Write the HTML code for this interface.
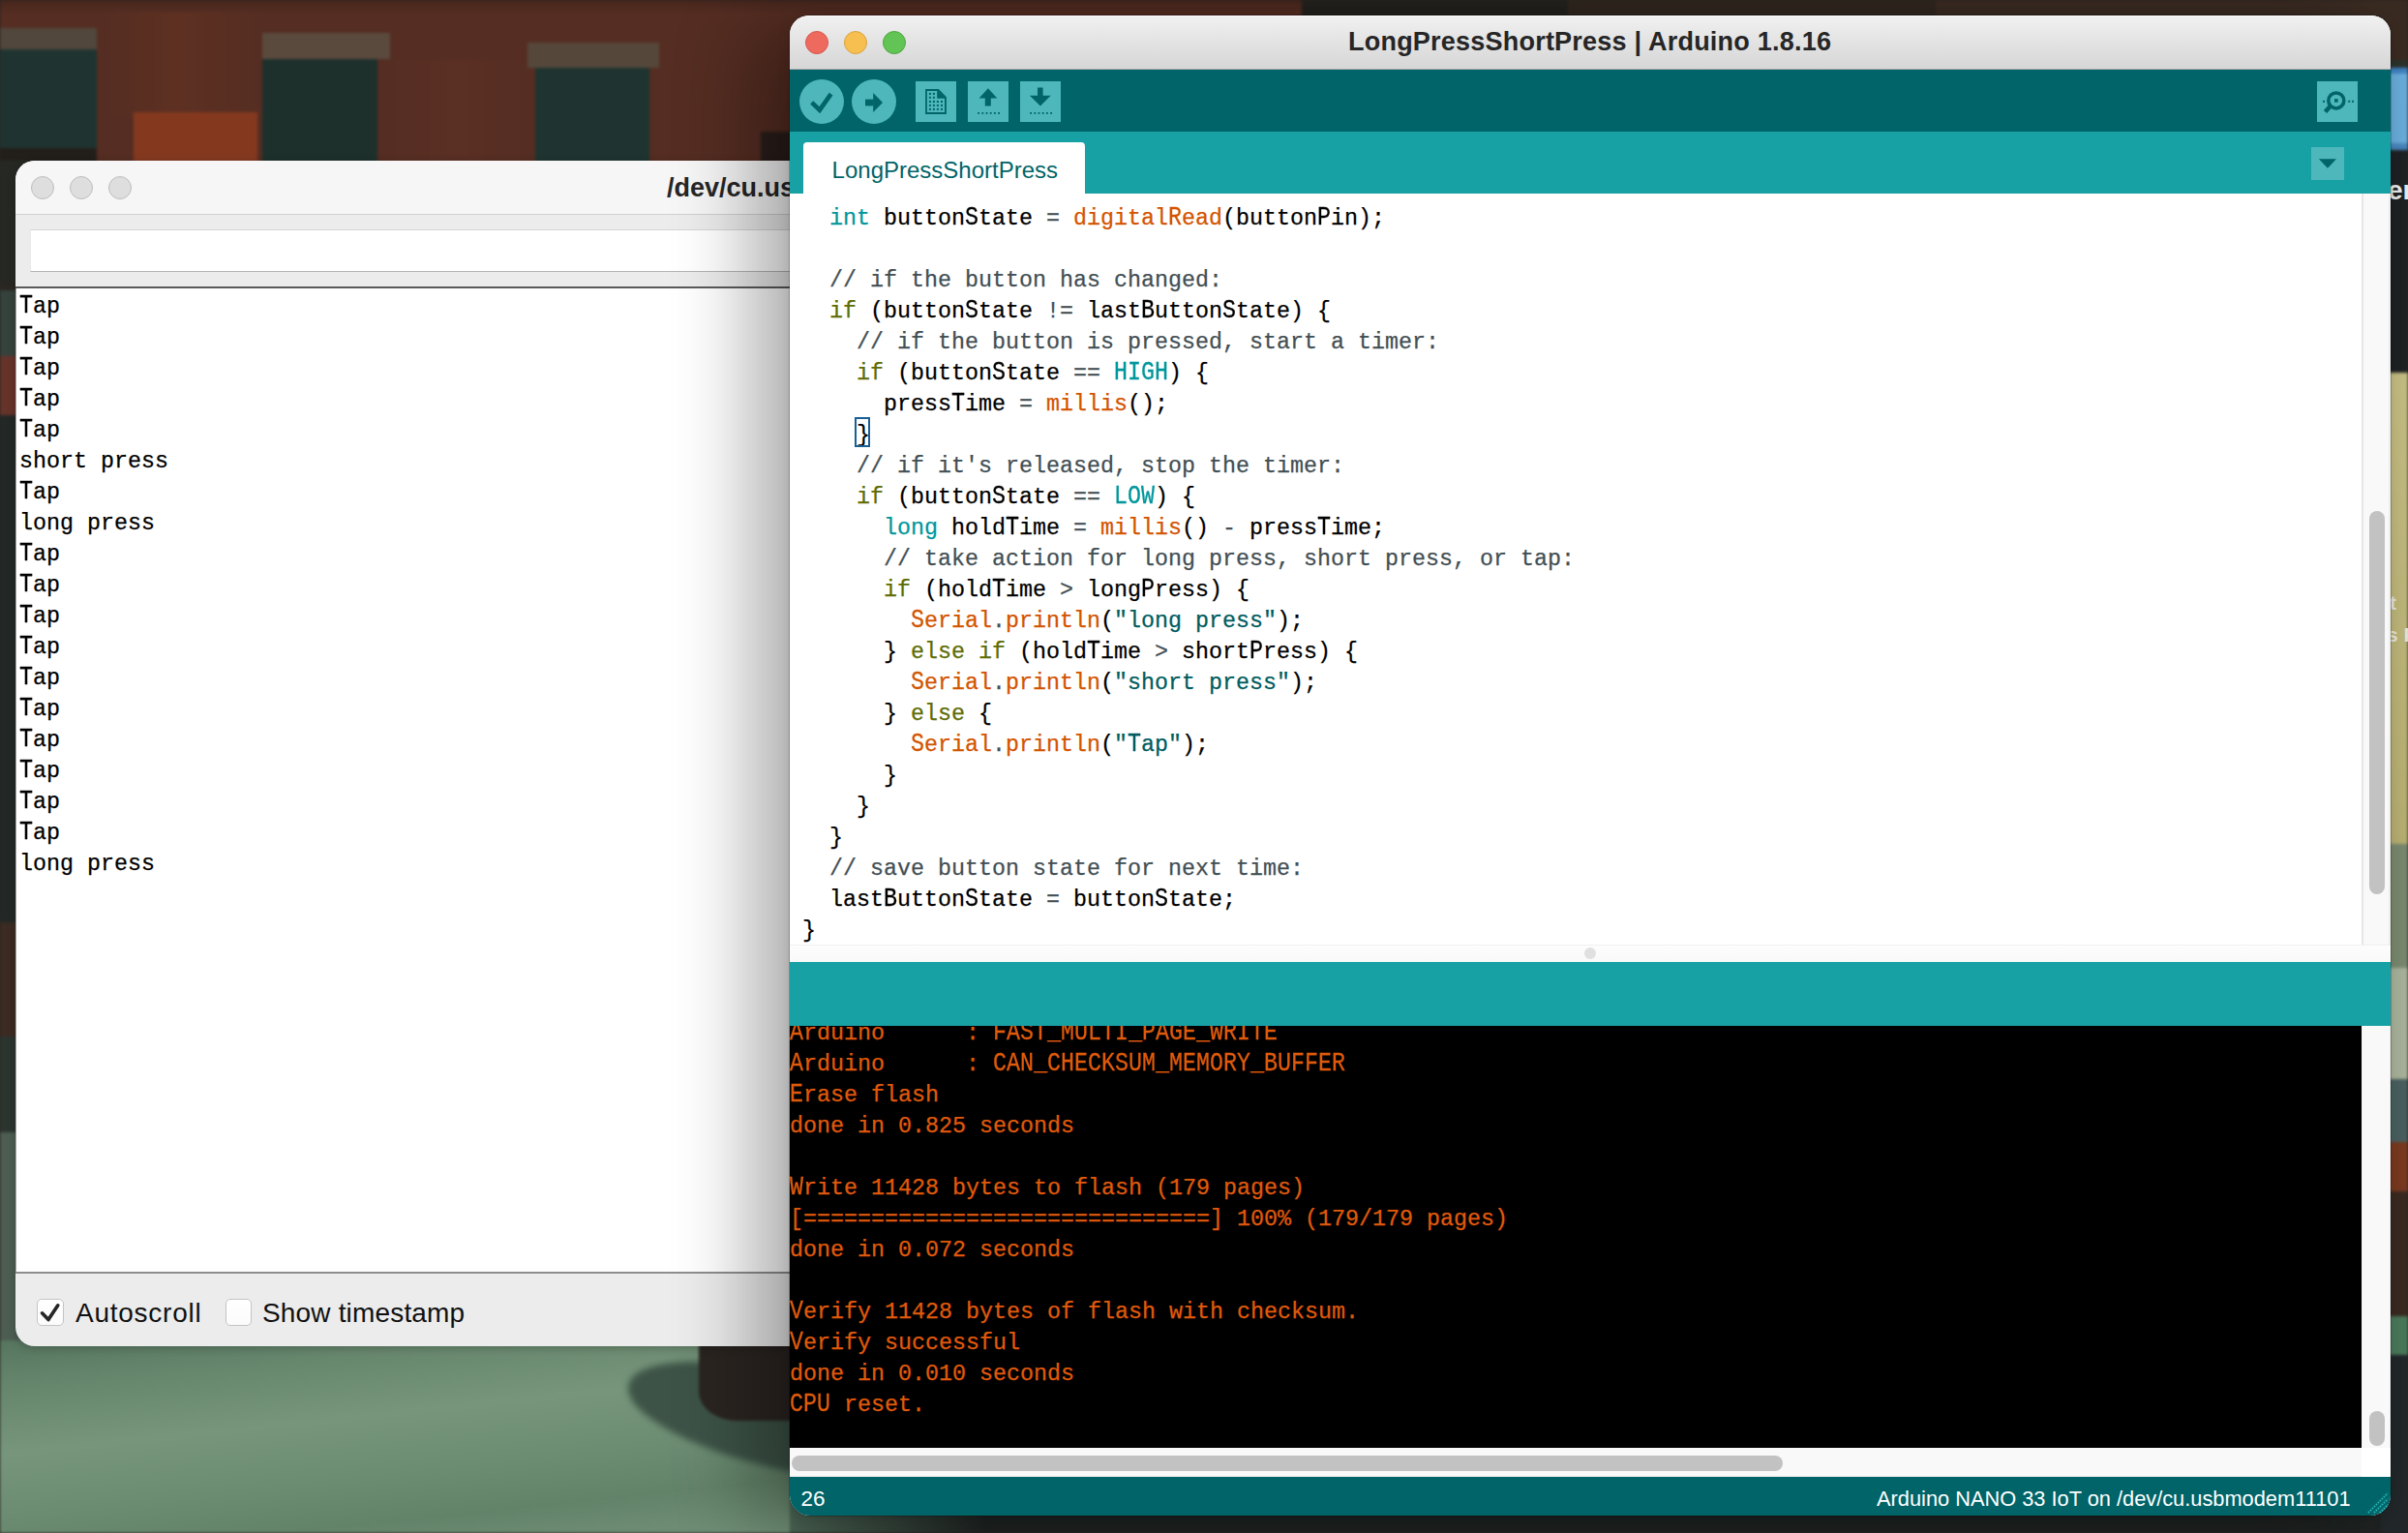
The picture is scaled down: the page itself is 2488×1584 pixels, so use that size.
<!DOCTYPE html>
<html><head><meta charset="utf-8">
<style>
*{box-sizing:border-box;margin:0;padding:0}
html,body{width:2488px;height:1584px;overflow:hidden;background:#2a2622;font-family:"Liberation Sans",sans-serif}
.a{position:absolute}
.mono{font-family:"Liberation Mono",monospace;font-size:23.33px;white-space:pre;line-height:32px;-webkit-text-stroke:0.25px currentColor}
/* background */
#bg{left:0;top:0;width:2488px;height:1584px;overflow:hidden;filter:blur(1.5px)}
/* serial monitor */
#sm{left:16px;top:166px;width:900px;height:1225px;border-radius:20px;overflow:hidden;background:#ececec;box-shadow:0 2px 10px rgba(0,0,0,.22)}
/* arduino window */
#aw{left:816px;top:16px;width:1654px;height:1550px;border-radius:20px 20px 21px 21px;overflow:hidden;background:#fff;box-shadow:0 0 0 1px rgba(0,0,0,.22),-40px 12px 80px rgba(0,0,0,.32),0 3px 14px rgba(0,0,0,.12)}
.tl{width:24px;height:24px;border-radius:50%}
.btn{background:#4db7bb}
.U{display:inline-block;transform:scaleY(1.18);transform-origin:50% 22.2px}
.code .k1{color:#00979c}
.code .k2{color:#d35400}
.code .k3{color:#5e6d03}
.code .c{color:#434f54}
.code .s{color:#005c5f}
.code .o{color:#434f54}
</style></head><body>
<div id="bg" class="a">
  <div class="a" style="left:0;top:0;width:1345px;height:180px;background:#552d22"></div>
  <div class="a" style="left:0;top:0;width:1345px;height:14px;background:linear-gradient(#45261c,#552d22)"></div>
  <div class="a" style="left:1345px;top:0;width:275px;height:180px;background:#23211d"></div><div class="a" style="left:1620px;top:0;width:380px;height:180px;background:#30261f"></div>
  <div class="a" style="left:2000px;top:0;width:488px;height:62px;background:#3a2b22"></div>
  <div class="a" style="left:0;top:29px;width:100px;height:22px;background:#52473c"></div>
  <div class="a" style="left:0;top:51px;width:100px;height:102px;background:#1f3430"></div>
  <div class="a" style="left:0;top:153px;width:100px;height:20px;background:#221e1a"></div>
  <div class="a" style="left:110px;top:12px;width:161px;height:110px;background:linear-gradient(90deg,#552d22,#5d3022 45%,#552d22)"></div><div class="a" style="left:138px;top:116px;width:128px;height:60px;background:#84391f"></div><div class="a" style="left:400px;top:61px;width:145px;height:115px;background:linear-gradient(90deg,#552d22,#5a2f24 50%,#552d22)"></div>
  <div class="a" style="left:271px;top:34px;width:132px;height:27px;background:#5a4a3d"></div>
  <div class="a" style="left:271px;top:61px;width:119px;height:115px;background:#1d302c"></div>
  <div class="a" style="left:545px;top:44px;width:136px;height:26px;background:#56473b"></div>
  <div class="a" style="left:553px;top:70px;width:118px;height:106px;background:#1f3430"></div>
  <div class="a" style="left:786px;top:136px;width:40px;height:40px;background:#2a1e1a"></div>
  <!-- left strip -->
  <div class="a" style="left:0;top:166px;width:30px;height:125px;background:#262824"></div>
  <div class="a" style="left:0;top:300px;width:30px;height:68px;background:#36423c"></div>
  <div class="a" style="left:0;top:368px;width:30px;height:61px;background:#66332a"></div>
  <div class="a" style="left:0;top:429px;width:30px;height:524px;background:#212826"></div>
  <div class="a" style="left:0;top:953px;width:30px;height:118px;background:#3b2b22"></div>
  <div class="a" style="left:0;top:1071px;width:30px;height:99px;background:#2c3430"></div>
  <div class="a" style="left:0;top:1170px;width:30px;height:230px;background:#4d5d52"></div>
  <!-- bottom ground -->
  <div class="a" style="left:0;top:1385px;width:900px;height:199px;background:linear-gradient(174deg,#56755f 0%,#67876d 18%,#76957a 40%,#6c8c72 62%,#638369 78%,#74927a 100%)"></div>
  <div class="a" style="left:645px;top:1418px;width:330px;height:100px;border-radius:50%;background:#3d5347;transform:rotate(13deg);filter:blur(3px)"></div>
  <div class="a" style="left:722px;top:1380px;width:110px;height:88px;border-radius:0 0 10px 40px/0 0 10px 30px;background:#2b2521"></div>
  <div class="a" style="left:900px;top:1500px;width:1588px;height:84px;background:#1f2322"></div>
  <div class="a" style="left:816px;top:1550px;width:200px;height:40px;background:linear-gradient(100deg,#4f6a58,#1f2322)"></div>
  <!-- right strip -->
  <div class="a" style="left:2460px;top:62px;width:28px;height:8px;background:#2c332c"></div>
  <div class="a" style="left:2460px;top:70px;width:28px;height:85px;background:#6aaedc;border-top:6px solid #3f82c2;border-bottom:7px solid #4a86bd"></div>
  <div class="a" style="left:2460px;top:155px;width:28px;height:230px;background:#1e2224"></div>
  <div class="a" style="left:2460px;top:385px;width:28px;height:487px;background:linear-gradient(#c6bf84,#b8b072)"></div>
  <div class="a" style="left:2460px;top:872px;width:28px;height:128px;background:#7a8a70"></div>
  <div class="a" style="left:2460px;top:1000px;width:28px;height:115px;background:#aab49c"></div>
  <div class="a" style="left:2460px;top:1115px;width:28px;height:65px;background:#4a6060"></div>
  <div class="a" style="left:2460px;top:1180px;width:28px;height:51px;background:#7a3a20"></div>
  <div class="a" style="left:2460px;top:1231px;width:28px;height:129px;background:#3a2a20"></div>
  <div class="a" style="left:2460px;top:1360px;width:28px;height:40px;background:#4a7a5a"></div>
  <div class="a" style="left:2460px;top:1400px;width:28px;height:184px;background:#22282a"></div>
</div>


<div class="a" style="left:2467px;top:181px;font-size:28px;font-weight:bold;white-space:nowrap;color:#ececec">er</div>
<div class="a" style="left:2469px;top:611px;font-size:21px;font-weight:bold;color:#e6e6dc">t</div>
<div class="a" style="left:2466px;top:644px;font-size:21px;font-weight:bold;white-space:nowrap;color:#e6e6dc">s P</div>
<div id="sm" class="a">
  <div class="a" style="left:0;top:0;width:900px;height:56px;background:#f6f6f6;border-bottom:1.5px solid #d0d0d0"></div>
  <div class="a tl" style="left:16px;top:16px;background:#dedede;border:1px solid #bdbdbd"></div>
  <div class="a tl" style="left:56px;top:16px;background:#dedede;border:1px solid #bdbdbd"></div>
  <div class="a tl" style="left:96px;top:16px;background:#dedede;border:1px solid #bdbdbd"></div>
  <div class="a" style="left:673px;top:13px;font-weight:bold;font-size:27px;color:#262626">/dev/cu.usbmodem11101</div>
  <div class="a" style="left:15px;top:71px;width:900px;height:44px;background:#fff;border:1px solid #d6d6d6;border-left-color:#e8e8e8;border-bottom:1.5px solid #b4b4b4"></div>
  <div class="a" style="left:0;top:130px;width:900px;height:2px;background:#5a5a5a"></div>
  <div class="a" style="left:0;top:132px;width:900px;height:1017px;background:#fff;border-left:1px solid #a8a8a8"></div>
  <div class="a" style="left:0;top:1148px;width:900px;height:2px;background:#8e8e8e"></div>

  <div class="a" style="left:22px;top:1176px;width:27.5px;height:28px;background:linear-gradient(#fff,#fbfbfb);border:1px solid #c4c4c4;border-radius:5px"></div>
  <svg class="a" style="left:22px;top:1176px" width="28" height="28"><path d="M5.5 14.8 L12 21.6 L21.8 6.8" fill="none" stroke="#262626" stroke-width="3.6" stroke-linecap="round" stroke-linejoin="round"/></svg>
  <div class="a" style="left:62px;top:1175px;font-size:28px;letter-spacing:0.75px;color:#111">Autoscroll</div>
  <div class="a" style="left:216.5px;top:1176px;width:27.5px;height:28px;background:linear-gradient(#fff,#fbfbfb);border:1px solid #c4c4c4;border-radius:5px"></div>
  <div class="a" style="left:255px;top:1175px;font-size:28px;letter-spacing:0.17px;color:#111">Show timestamp</div>
  <div class="a mono" style="left:4px;top:135px;color:#000"><span class="U">T</span>ap
<span class="U">T</span>ap
<span class="U">T</span>ap
<span class="U">T</span>ap
<span class="U">T</span>ap
short press
<span class="U">T</span>ap
long press
<span class="U">T</span>ap
<span class="U">T</span>ap
<span class="U">T</span>ap
<span class="U">T</span>ap
<span class="U">T</span>ap
<span class="U">T</span>ap
<span class="U">T</span>ap
<span class="U">T</span>ap
<span class="U">T</span>ap
<span class="U">T</span>ap
long press</div>
</div>

<div id="aw" class="a">
  <div class="a" style="left:0;top:0;width:1654px;height:56px;background:linear-gradient(#f0f0f0,#d6d6d6);border-top:1px solid #fafafa;border-bottom:1px solid #adadad"></div>
  <div class="a tl" style="left:16px;top:16px;background:#ee6a5f;border:1px solid #d4584b"></div>
  <div class="a tl" style="left:56px;top:16px;background:#f6bf50;border:1px solid #d9a43e"></div>
  <div class="a tl" style="left:96px;top:16px;background:#61c454;border:1px solid #4ea53f"></div>
  <div class="a" style="left:577px;top:12px;font-weight:bold;font-size:27px;letter-spacing:0.22px;color:#262626">LongPressShortPress | Arduino 1.8.16</div>
  <div class="a" style="left:0;top:56px;width:1654px;height:64px;background:#006468"></div>
  <div class="a" style="left:0;top:120px;width:1654px;height:64px;background:#17a1a5"></div>
  <div class="a" style="left:14px;top:131px;width:291px;height:60px;background:#fff;border-radius:4px 4px 0 0"></div>
  <div class="a" style="left:0;top:960px;width:1654px;height:18px;background:linear-gradient(#fdfdfd,#f9f9f9);border-top:1px solid #f0f0f0"></div>
  <div class="a" style="left:0;top:978px;width:1654px;height:66px;background:#17a1a5"></div>
  <div class="a" style="left:0;top:1044px;width:1624px;height:436px;background:#000"></div>
  <div class="a" style="left:0;top:1510px;width:1654px;height:40px;background:#006468"></div>


  <!-- toolbar buttons -->
  <div class="a btn" style="left:9.8px;top:65.9px;width:46.2px;height:46.2px;border-radius:50%"></div>
  <div class="a btn" style="left:63.9px;top:65.9px;width:46.2px;height:46.2px;border-radius:50%"></div>
  <div class="a btn" style="left:130px;top:68px;width:42px;height:42px"></div>
  <div class="a btn" style="left:184px;top:68px;width:42px;height:42px"></div>
  <div class="a btn" style="left:238px;top:68px;width:42px;height:42px"></div>
  <div class="a btn" style="left:1578px;top:68px;width:42px;height:42px"></div>
  <div class="a btn" style="left:1572px;top:136px;width:34px;height:34px"></div>
  <div class="a" style="left:43.6px;top:145.5px;font-size:24px;color:#006468">LongPressShortPress</div>
  <!-- editor scrollbar -->
  <div class="a" style="left:1624px;top:184px;width:30px;height:776px;background:#f9f9f9;border-left:2px solid #e6e6e6;border-right:2px solid #efefef"></div>
  <div class="a" style="left:1632px;top:512px;width:16px;height:396px;background:#c2c2c2;border-radius:8px"></div>
  <div class="a" style="left:820.8px;top:963px;width:12px;height:12px;background:#e0e0e0;border-radius:50%"></div>
  <!-- console scrollbar -->
  <div class="a" style="left:1624px;top:1044px;width:30px;height:436px;background:#f9f9f9;border-left:1px solid #f0f0f0;border-right:1px solid #ececec"></div>
  <div class="a" style="left:1632px;top:1442px;width:16px;height:36px;background:#c2c2c2;border-radius:8px"></div>
  <div class="a" style="left:0;top:1480px;width:1624px;height:30px;background:#f9f9f9;border-bottom:1px solid #eeeeee"></div>
  <div class="a" style="left:1624px;top:1480px;width:30px;height:30px;background:#fff"></div>
  <div class="a" style="left:2px;top:1488px;width:1024px;height:16px;background:#c2c2c2;border-radius:8px"></div>
  <div class="a" style="left:11.5px;top:1519.5px;font-size:22.5px;color:#fff">26</div>
  <div class="a" style="left:1123px;top:1520px;font-size:21.8px;color:#fff">Arduino NANO 33 IoT on /dev/cu.usbmodem11101</div>
  <div class="a" style="left:0;top:184px;width:1624px;height:776px;overflow:hidden">
    <div class="a mono code" style="left:13px;top:-22.2px;color:#000">
  <span class="k1">int</span> button<span class="U">S</span>tate <span class="o">=</span> <span class="k2">digital<span class="U">R</span>ead</span>(button<span class="U">P</span>in);

<span class="c">  // if the button has changed:</span>
  <span class="k3">if</span> (button<span class="U">S</span>tate <span class="o">!=</span> last<span class="U">B</span>utton<span class="U">S</span>tate) {
<span class="c">    // if the button is pressed, start a timer:</span>
    <span class="k3">if</span> (button<span class="U">S</span>tate <span class="o">==</span> <span class="k1"><span class="U">HIGH</span></span>) {
      press<span class="U">T</span>ime <span class="o">=</span> <span class="k2">millis</span>();
    <span class="br">}</span>
<span class="c">    // if it's released, stop the timer:</span>
    <span class="k3">if</span> (button<span class="U">S</span>tate <span class="o">==</span> <span class="k1"><span class="U">LOW</span></span>) {
      <span class="k1">long</span> hold<span class="U">T</span>ime <span class="o">=</span> <span class="k2">millis</span>() <span class="o">-</span> press<span class="U">T</span>ime;
<span class="c">      // take action for long press, short press, or tap:</span>
      <span class="k3">if</span> (hold<span class="U">T</span>ime <span class="o">&gt;</span> long<span class="U">P</span>ress) {
        <span class="k2"><span class="U">S</span>erial</span><span class="o">.</span><span class="k2">println</span>(<span class="s">"long press"</span>);
      } <span class="k3">else</span> <span class="k3">if</span> (hold<span class="U">T</span>ime <span class="o">&gt;</span> short<span class="U">P</span>ress) {
        <span class="k2"><span class="U">S</span>erial</span><span class="o">.</span><span class="k2">println</span>(<span class="s">"short press"</span>);
      } <span class="k3">else</span> {
        <span class="k2"><span class="U">S</span>erial</span><span class="o">.</span><span class="k2">println</span>(<span class="s">"<span class="U">T</span>ap"</span>);
      }
    }
  }
<span class="c">  // save button state for next time:</span>
  last<span class="U">B</span>utton<span class="U">S</span>tate <span class="o">=</span> button<span class="U">S</span>tate;
}
</div>
  </div>
  <div class="a" style="left:67px;top:415px;width:16px;height:31px;border:2px solid #1a5f94"></div>
  <div class="a" style="left:0;top:1044px;width:1624px;height:436px;overflow:hidden">
    <div class="a mono" style="left:0;top:-8.2px;color:#e05a0b"><span class="U">A</span>rduino      : <span class="U">FAST</span>_<span class="U">MULTI</span>_<span class="U">PAGE</span>_<span class="U">WRITE</span>
<span class="U">A</span>rduino      : <span class="U">CAN</span>_<span class="U">CHECKSUM</span>_<span class="U">MEMORY</span>_<span class="U">BUFFER</span>
<span class="U">E</span>rase flash
done in 0.825 seconds

<span class="U">W</span>rite 11428 bytes to flash (179 pages)
[==============================] 100% (179/179 pages)
done in 0.072 seconds

<span class="U">V</span>erify 11428 bytes of flash with checksum.
<span class="U">V</span>erify successful
done in 0.010 seconds
<span class="U">CPU</span> reset.</div>
  </div>
</div>

<svg class="a" style="left:0;top:0" width="2488" height="1584" viewBox="0 0 2488 1584">
 <g fill="#006468" stroke="none">
  <path d="M838.7 105.9 L846.9 113.7 L858.6 97.2" fill="none" stroke="#006468" stroke-width="4.6"/>
  <rect x="894" y="102.6" width="8.6" height="6.8"/>
  <path d="M902.2 96 L912 105.9 L902.2 115.9 Z"/>
  <path d="M956.1 91.9 H969.8 L977.9 100.2 V118 H956.1 Z"/><path d="M957.9 94 H968.2 V101.8 H976 V116 H957.9 Z" fill="#4db7bb"/><rect x="959.9" y="95.9" width="2" height="2"/><rect x="963.9" y="95.9" width="2" height="2"/><rect x="959.9" y="99.8" width="2" height="2"/><rect x="963.9" y="99.8" width="2" height="2"/><rect x="959.9" y="104" width="2" height="2"/><rect x="963.9" y="104" width="2" height="2"/><rect x="967.9" y="104" width="2" height="2"/><rect x="972" y="104" width="2" height="2"/><rect x="959.9" y="107.9" width="2" height="2"/><rect x="963.9" y="107.9" width="2" height="2"/><rect x="967.9" y="107.9" width="2" height="2"/><rect x="972" y="107.9" width="2" height="2"/><rect x="959.9" y="111.9" width="2" height="2"/><rect x="963.9" y="111.9" width="2" height="2"/><rect x="967.9" y="111.9" width="2" height="2"/><rect x="972" y="111.9" width="2" height="2"/>
  <path d="M1011.6 101.5 L1020.9 91.3 L1030.3 101.5 H1023.8 V109.4 H1017.8 V101.5 Z"/>
  <path d="M1072 90.4 H1077.6 V98.8 H1085.7 L1074.9 109.4 L1063.9 98.8 H1072 Z"/>
  <path d="M2395.9 164.2 H2414 L2405 173.7 Z"/>
  <circle cx="2413.8" cy="103.9" r="8" fill="none" stroke="#006468" stroke-width="3.5"/>
  <rect x="2412" y="102.1" width="3.6" height="3.6"/>
  <path d="M2407.5 110 L2402.5 115.5" stroke="#006468" stroke-width="4.5"/>
  <rect x="2400" y="103.8" width="2" height="2"/>
  <rect x="2426.2" y="103.8" width="2" height="2"/>
  <rect x="2430" y="103.8" width="2" height="2"/>
 </g>
 <g fill="#006468">
  <rect x="1010.2" y="116" width="1.8" height="1.8"/><rect x="1014.4" y="116" width="1.8" height="1.8"/><rect x="1018.6" y="116" width="1.8" height="1.8"/><rect x="1022.8" y="116" width="1.8" height="1.8"/><rect x="1027" y="116" width="1.8" height="1.8"/><rect x="1031.2" y="116" width="1.8" height="1.8"/>
  <rect x="1064.2" y="116" width="1.8" height="1.8"/><rect x="1068.4" y="116" width="1.8" height="1.8"/><rect x="1072.6" y="116" width="1.8" height="1.8"/><rect x="1076.8" y="116" width="1.8" height="1.8"/><rect x="1081" y="116" width="1.8" height="1.8"/><rect x="1085.2" y="116" width="1.8" height="1.8"/>
 </g>
 <g stroke="#2ab5b9" stroke-width="2" stroke-dasharray="1.5 1.33">
  <path d="M2446.9 1563 L2467.2 1542.7"/>
  <path d="M2452.9 1563 L2467.2 1548.7"/>
  <path d="M2458.9 1563 L2467.2 1554.7"/>
 </g>
</svg>
</body></html>
